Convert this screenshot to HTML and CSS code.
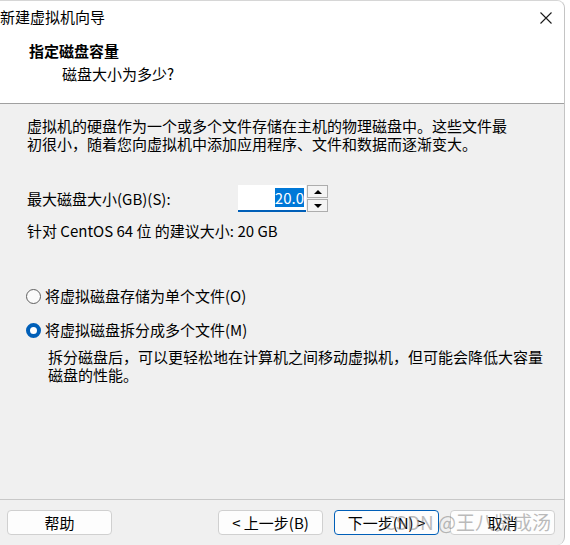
FILE: index.html
```html
<!DOCTYPE html>
<html lang="zh-CN">
<head>
    <meta charset="UTF-8">
    <title>新建虚拟机向导</title>
    <link rel="stylesheet" href="styles.css">
</head>
<body>
    <div class="window">
        <div class="titlebar">
            <span class="title">新建虚拟机向导</span>
            <svg class="close" width="14" height="14" viewBox="0 0 14 14">
                <path d="M1.5 1.5 L12.5 12.5 M12.5 1.5 L1.5 12.5" stroke="#1a1a1a" stroke-width="1.1" fill="none"/>
            </svg>
        </div>
        <div class="header">
            <div class="heading">指定磁盘容量</div>
            <div class="subheading">磁盘大小为多少?</div>
        </div>

        <div class="content">
            <p class="intro">虚拟机的硬盘作为一个或多个文件存储在主机的物理磁盘中。这些文件最<br>初很小，随着您向虚拟机中添加应用程序、文件和数据而逐渐变大。</p>

            <div class="size-row">
                <label class="size-label" for="disk-size">最大磁盘大小(GB)(S):</label>
                <div class="spin-box">
                    <div class="spin-input"><span class="selected">20.0</span></div>
                    <div class="spin-buttons">
                        <div class="spin-btn"><span class="tri-up"></span></div>
                        <div class="spin-btn"><span class="tri-down"></span></div>
                    </div>
                </div>
            </div>
            <div class="hint">针对 CentOS 64 位 的建议大小: 20 GB</div>

            <div class="options">
                <div class="option">
                    <span class="radio"></span>
                    <span>将虚拟磁盘存储为单个文件(O)</span>
                </div>
                <div class="option">
                    <span class="radio checked"></span>
                    <span>将虚拟磁盘拆分成多个文件(M)</span>
                </div>
                <p class="option-desc">拆分磁盘后，可以更轻松地在计算机之间移动虚拟机，但可能会降低大容量<br>磁盘的性能。</p>
            </div>
        </div>

        <div class="footer">
            <button class="btn">帮助</button>
            <div class="nav-buttons">
                <button class="btn">&lt; 上一步(B)</button>
                <button class="btn btn-default">下一步(N) &gt;</button>
                <button class="btn">取消</button>
            </div>
            <div class="watermark">CSDN @王八贤成汤</div>
        </div>
    </div>
</body>
</html>
```

FILE: styles.css
```css
html, body {
    margin: 0;
    background: #ffffff;
}
body {
    font-family: "Noto Sans CJK SC", "Noto Sans", sans-serif;
    font-size: 15px;
    line-height: 18px;
    color: #000000;
}
.window {
    width: 565px;
    height: 545px;
    box-sizing: border-box;
    border-top: 1px solid #d6d6d6;
    border-right: 1px solid #c4c4c4;
    border-radius: 0 8px 8px 0;
    overflow: hidden;
    background: #f0f0f0;
    display: flex;
    flex-direction: column;
}
.titlebar {
    height: 33px;
    background: #ffffff;
    display: flex;
    align-items: center;
    justify-content: space-between;
    padding-right: 11px;
}
.title {
    font-size: 15px;
    margin-top: -2px;
}
.header {
    background: #ffffff;
    height: 70px;
    box-sizing: border-box;
    padding-top: 8px;
    border-bottom: 1px solid #a0a0a0;
}
.heading {
    font-weight: bold;
    padding-left: 29px;
}
.subheading {
    margin-top: 5px;
    padding-left: 62px;
}
.content {
    height: 395px;
    box-sizing: border-box;
    padding: 13px 0 0 27px;
}
.intro {
    margin: 0;
}
.size-row {
    display: flex;
    align-items: center;
    margin-top: 32px;
    height: 27px;
}
.size-label {
    width: 211px;
}
.spin-box {
    display: flex;
}
.spin-input {
    width: 68px;
    height: 27px;
    box-sizing: border-box;
    background: #ffffff;
    border-bottom: 2px solid #005fb8;
    display: flex;
    align-items: center;
    justify-content: flex-end;
    padding-right: 2px;
}
.selected {
    background: #0078d7;
    color: #ffffff;
    line-height: 19px;
}
.spin-buttons {
    display: flex;
    flex-direction: column;
    margin-left: 1px;
    gap: 1px;
}
.spin-btn {
    width: 21px;
    height: 13px;
    box-sizing: border-box;
    border: 1px solid #adadad;
    background: #f4f4f4;
    display: flex;
    align-items: center;
    justify-content: center;
}
.tri-up {
    border-left: 4px solid transparent;
    border-right: 4px solid transparent;
    border-bottom: 4px solid #000000;
}
.tri-down {
    border-left: 4px solid transparent;
    border-right: 4px solid transparent;
    border-top: 4px solid #000000;
}
.hint {
    margin-top: 10px;
}
.options {
    margin-top: 47px;
}
.option {
    display: flex;
    align-items: center;
    gap: 4px;
    margin-left: -1px;
    margin-bottom: 16px;
}
.radio {
    width: 15px;
    height: 15px;
    box-sizing: border-box;
    border-radius: 50%;
    border: 1px solid #5f5f5f;
    background: #fafafa;
}
.radio.checked {
    border: 4px solid #005fb8;
    background: #ffffff;
}
.option-desc {
    margin: -7px 0 0 21px;
}
.footer {
    position: relative;
    flex: 1;
    border-top: 1px solid #c8c8c8;
    display: flex;
    align-items: flex-start;
    justify-content: space-between;
    padding: 10px 9px 0 7px;
}
.nav-buttons {
    display: flex;
    gap: 11px;
}
.btn {
    width: 105px;
    height: 25px;
    font-family: inherit;
    font-size: 15px;
    background: #fdfdfd;
    border: 1px solid #d0d0d0;
    border-radius: 4px;
    padding: 0;
    color: #000000;
}
.btn-default {
    border-color: #005fb8;
}
.watermark {
    position: absolute;
    left: 384px;
    top: 9px;
    font-size: 19px;
    line-height: 26px;
    color: rgba(120, 120, 120, 0.5);
    white-space: nowrap;
}
```
